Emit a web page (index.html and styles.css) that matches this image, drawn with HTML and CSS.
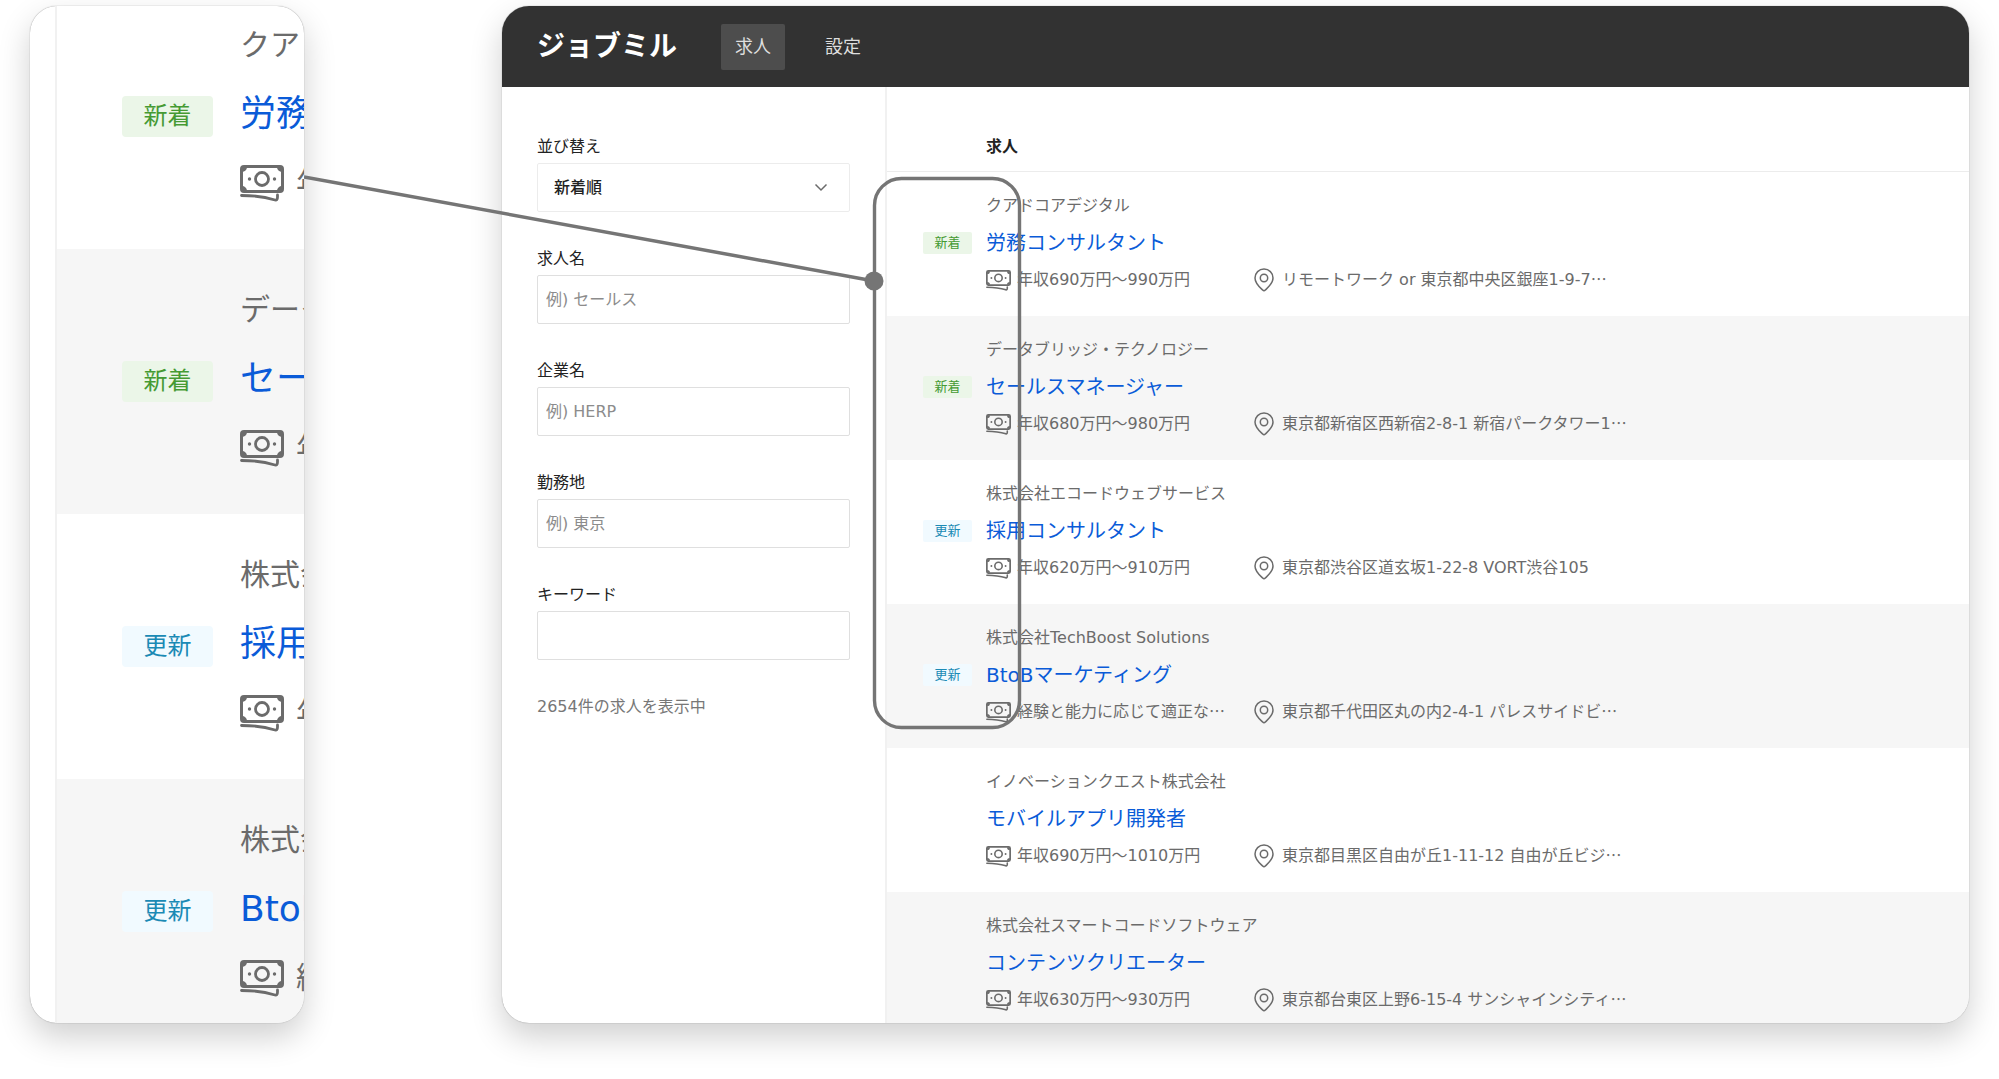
FILE: index.html
```html
<!DOCTYPE html>
<html lang="ja">
<head>
<meta charset="utf-8">
<meta name="viewport" content="width=device-width, initial-scale=1">
<title>ジョブミル</title>
<link rel="stylesheet" href="styles.css">
</head>
<body>
<svg class="sprite" aria-hidden="true">
  <symbol id="money" viewBox="0 0 44 37">
    <rect x="1.500" y="1.500" width="41" height="25" rx="2.500" fill="none" stroke="currentColor" stroke-width="3"/>
    <path d="M2 2h5a5 5 0 0 1-5 5zM42 2h-5a5 5 0 0 0 5 5zM2 26h5a5 5 0 0 0-5-5zM42 26h-5a5 5 0 0 1 5-5z" fill="currentColor"/>
    <circle cx="22" cy="14" r="6.500" fill="none" stroke="currentColor" stroke-width="2.800"/>
    <circle cx="9.500" cy="14" r="1.700" fill="currentColor"/>
    <circle cx="34.500" cy="14" r="1.700" fill="currentColor"/>
    <path d="M1.500 30.500C14 30.500 24 31.500 35 35q2.500.500 2.500-3v-2" fill="none" stroke="currentColor" stroke-width="2.800" stroke-linecap="round"/>
  </symbol>
  <symbol id="pin" viewBox="0 0 20 24">
    <path d="M10 1C5 1 1 5 1 10c0 5.500 5 9.500 7.600 12q1.400 1.300 2.800 0C14 19.500 19 15.500 19 10c0-5-4-9-9-9z" fill="none" stroke="currentColor" stroke-width="1.500"/>
    <circle cx="10" cy="10" r="3.700" fill="none" stroke="currentColor" stroke-width="1.500"/>
  </symbol>
</svg>

<div class="stage">
  <aside class="card magnifier" aria-label="拡大表示">
    <ul class="jobs">
      <li class="job">
        <span class="badge badge-new">新着</span>
        <div class="job-body">
          <p class="company">クアドコアデジタル</p>
          <a class="title" href="#">労務コンサルタント</a>
          <p class="meta"><span class="salary"><svg class="money"><use href="#money"/></svg>年収690万円〜990万円</span></p>
        </div>
      </li>
      <li class="job">
        <span class="badge badge-new">新着</span>
        <div class="job-body">
          <p class="company">データブリッジ・テクノロジー</p>
          <a class="title" href="#">セールスマネージャー</a>
          <p class="meta"><span class="salary"><svg class="money"><use href="#money"/></svg>年収680万円〜980万円</span></p>
        </div>
      </li>
      <li class="job">
        <span class="badge badge-update">更新</span>
        <div class="job-body">
          <p class="company">株式会社エコードウェブサービス</p>
          <a class="title" href="#">採用コンサルタント</a>
          <p class="meta"><span class="salary"><svg class="money"><use href="#money"/></svg>年収620万円〜910万円</span></p>
        </div>
      </li>
      <li class="job">
        <span class="badge badge-update">更新</span>
        <div class="job-body">
          <p class="company">株式会社TechBoost Solutions</p>
          <a class="title" href="#">BtoBマーケティング</a>
          <p class="meta"><span class="salary"><svg class="money"><use href="#money"/></svg><span>経験と能力に応じて適正な<span class="more">…</span></span></span></p>
        </div>
      </li>
    </ul>
  </aside>

  <div class="card app">
    <header class="topbar">
      <h1 class="logo">ジョブミル</h1>
      <nav class="nav">
        <a class="nav-link current" href="#">求人</a>
        <a class="nav-link" href="#">設定</a>
      </nav>
    </header>
    <div class="content">
      <form class="filters">
        <div class="field">
          <label for="sort">並び替え</label>
          <div class="select">
            <select id="sort"><option>新着順</option></select>
            <svg class="chevron" viewBox="0 0 14 9" aria-hidden="true"><path d="M1.500 1.500L7 7l5.500-5.500" fill="none" stroke="currentColor" stroke-width="1.500"/></svg>
          </div>
        </div>
        <div class="field">
          <label for="job">求人名</label>
          <input id="job" type="text" placeholder="例) セールス">
        </div>
        <div class="field">
          <label for="company">企業名</label>
          <input id="company" type="text" placeholder="例) HERP">
        </div>
        <div class="field">
          <label for="place">勤務地</label>
          <input id="place" type="text" placeholder="例) 東京">
        </div>
        <div class="field">
          <label for="keyword">キーワード</label>
          <input id="keyword" type="text">
        </div>
        <p class="count">2654件の求人を表示中</p>
      </form>

      <main class="results">
        <h2 class="results-head">求人</h2>
        <ul class="jobs">
          <li class="job">
            <span class="badge badge-new">新着</span>
            <div class="job-body">
              <p class="company">クアドコアデジタル</p>
              <a class="title" href="#">労務コンサルタント</a>
              <p class="meta"><span class="salary"><svg class="money"><use href="#money"/></svg>年収690万円〜990万円</span><span class="place"><svg class="pin"><use href="#pin"/></svg><span>リモートワーク or 東京都中央区銀座1-9-7<span class="more">…</span></span></span></p>
            </div>
          </li>
          <li class="job">
            <span class="badge badge-new">新着</span>
            <div class="job-body">
              <p class="company">データブリッジ・テクノロジー</p>
              <a class="title" href="#">セールスマネージャー</a>
              <p class="meta"><span class="salary"><svg class="money"><use href="#money"/></svg>年収680万円〜980万円</span><span class="place"><svg class="pin"><use href="#pin"/></svg><span>東京都新宿区西新宿2-8-1 新宿パークタワー1<span class="more">…</span></span></span></p>
            </div>
          </li>
          <li class="job">
            <span class="badge badge-update">更新</span>
            <div class="job-body">
              <p class="company">株式会社エコードウェブサービス</p>
              <a class="title" href="#">採用コンサルタント</a>
              <p class="meta"><span class="salary"><svg class="money"><use href="#money"/></svg>年収620万円〜910万円</span><span class="place"><svg class="pin"><use href="#pin"/></svg><span>東京都渋谷区道玄坂1-22-8 VORT渋谷105</span></span></p>
            </div>
          </li>
          <li class="job">
            <span class="badge badge-update">更新</span>
            <div class="job-body">
              <p class="company">株式会社TechBoost Solutions</p>
              <a class="title" href="#">BtoBマーケティング</a>
              <p class="meta"><span class="salary"><svg class="money"><use href="#money"/></svg><span>経験と能力に応じて適正な<span class="more">…</span></span></span><span class="place"><svg class="pin"><use href="#pin"/></svg><span>東京都千代田区丸の内2-4-1 パレスサイドビ<span class="more">…</span></span></span></p>
            </div>
          </li>
          <li class="job">
            <div class="job-body">
              <p class="company">イノベーションクエスト株式会社</p>
              <a class="title" href="#">モバイルアプリ開発者</a>
              <p class="meta"><span class="salary"><svg class="money"><use href="#money"/></svg>年収690万円〜1010万円</span><span class="place"><svg class="pin"><use href="#pin"/></svg><span>東京都目黒区自由が丘1-11-12 自由が丘ビジ<span class="more">…</span></span></span></p>
            </div>
          </li>
          <li class="job">
            <div class="job-body">
              <p class="company">株式会社スマートコードソフトウェア</p>
              <a class="title" href="#">コンテンツクリエーター</a>
              <p class="meta"><span class="salary"><svg class="money"><use href="#money"/></svg>年収630万円〜930万円</span><span class="place"><svg class="pin"><use href="#pin"/></svg><span>東京都台東区上野6-15-4 サンシャインシティ<span class="more">…</span></span></span></p>
            </div>
          </li>
        </ul>
      </main>
    </div>
  </div>

  <svg class="callout" viewBox="0 0 720 560" aria-hidden="true">
    <path d="M0 4L570 108" stroke="currentColor" stroke-width="3.500"/>
    <rect x="570.500" y="5.500" width="145" height="549" rx="27" fill="none" stroke="currentColor" stroke-width="3.400"/>
    <circle cx="570" cy="108" r="9.500" fill="currentColor"/>
  </svg>
</div>
</body>
</html>
```

FILE: styles.css
```css
* {
  box-sizing: border-box;
}

body {
  margin: 0;
  background: #fff;
  color: #222;
  font-family: "DejaVu Sans", "Noto Sans CJK JP", sans-serif;
  font-size: 16px;
  line-height: 24px;
}

h1, h2, p, ul {
  margin: 0;
  padding: 0;
}

ul {
  list-style: none;
}

a {
  text-decoration: none;
}

.sprite {
  display: none;
}

.stage {
  position: relative;
  display: grid;
  grid-template-columns: 274px minmax(0, 1fr);
  gap: 198px;
  padding: 6px 30px 56px;
}

.card {
  overflow: hidden;
  border-radius: 27px;
  background: #fff;
  box-shadow: 0 0 1px rgba(0, 0, 0, 0.5), 0 14px 32px rgba(0, 0, 0, 0.19);
}

/* Top bar */
.topbar {
  display: flex;
  align-items: center;
  gap: 44px;
  height: 81px;
  padding: 0 35px;
  background: #323232;
  color: #fff;
}

.logo {
  font-size: 28px;
  line-height: 40px;
  font-weight: 700;
}

.nav {
  display: flex;
  gap: 26px;
}

.nav-link {
  padding: 11px 14px;
  border-radius: 2px;
  color: #dedede;
  font-size: 18px;
}

.nav-link.current {
  background: #4d4d4d;
}

/* Filters */
.content {
  display: flex;
}

.filters {
  flex: 0 0 385px;
  display: flex;
  flex-direction: column;
  gap: 35px;
  padding: 48px 35px;
  border-right: 2px solid #f1f1f1;
}

.field {
  display: flex;
  flex-direction: column;
  gap: 4px;
}

.field input,
.field select {
  width: 100%;
  height: 49px;
  border: 1px solid #dfdfdf;
  border-radius: 2px;
  background: #fff;
  color: #222;
  font: inherit;
}

.field input {
  padding: 0 8px;
}

.field input::placeholder {
  color: #8c8c8c;
  opacity: 1;
}

.select {
  display: grid;
  align-items: center;
}

.select > * {
  grid-area: 1 / 1;
}

.field select {
  appearance: none;
  padding: 0 16px;
  border-color: #ececec;
  font-weight: 500;
}

.chevron {
  justify-self: end;
  width: 14px;
  height: 9px;
  margin-right: 22px;
  color: #6b6b6b;
  pointer-events: none;
}

.count {
  color: #777;
}

/* Results */
.results {
  flex: 1;
  min-width: 0;
}

.results-head {
  padding: 48px 99px 12px;
  border-bottom: 1px solid #ececec;
  font-size: 16px;
  font-weight: 700;
}

.job {
  display: grid;
  grid-template-columns: 49px minmax(0, 1fr);
  gap: 14px;
  align-items: center;
  padding: 22px 0 24px 36px;
  color: #6b6b6b;
  white-space: nowrap;
}

.job:nth-child(even) {
  background: #f6f6f6;
}

.job:last-child {
  padding-bottom: 11px;
}

.badge {
  border-radius: 2px;
  font-size: 13px;
  line-height: 22px;
  text-align: center;
}

.badge-new {
  background: #ebf6e8;
  color: #459a33;
}

.badge-update {
  background: #f1faff;
  color: #1b8ab5;
}

.job-body {
  grid-column: 2;
  display: flex;
  flex-direction: column;
  align-items: flex-start;
  gap: 11px;
}

.title {
  color: #0a5bd8;
  font-size: 20px;
  line-height: 28px;
}

.meta,
.salary,
.place {
  display: flex;
  align-items: center;
}

.salary {
  width: 268px;
  gap: 6px;
}

.place {
  gap: 8px;
}

.more {
  font-family: "Noto Sans CJK JP", sans-serif;
  line-height: 1;
}

.money {
  flex: none;
  width: 25px;
  height: 21px;
}

.pin {
  flex: none;
  width: 20px;
  height: 24px;
}

/* Magnified copy of the badge column */
.magnifier {
  padding-left: 25px;
}

.magnifier .jobs {
  margin-top: -22px;
  border-left: 2px solid #f1f1f1;
}

.magnifier .job {
  grid-template-columns: 91px minmax(0, 1fr);
  gap: 27px;
  padding: 39px 0 44px 65px;
  font-size: 30px;
  line-height: 44px;
}

.magnifier .job:last-child {
  padding-bottom: 23px;
}

.magnifier .job-body {
  gap: 21px;
}

.magnifier .badge {
  margin-top: 4px;
  border-radius: 4px;
  font-size: 24px;
  line-height: 41px;
}

.magnifier .title {
  font-size: 36px;
  line-height: 52px;
}

.magnifier .salary {
  gap: 12px;
}

.magnifier .money {
  width: 44px;
  height: 37px;
}

/* Line and frame that tie the magnified strip to the list */
.callout {
  position: absolute;
  top: 173px;
  left: 304px;
  width: 720px;
  height: 560px;
  color: #757575;
  pointer-events: none;
}
```
